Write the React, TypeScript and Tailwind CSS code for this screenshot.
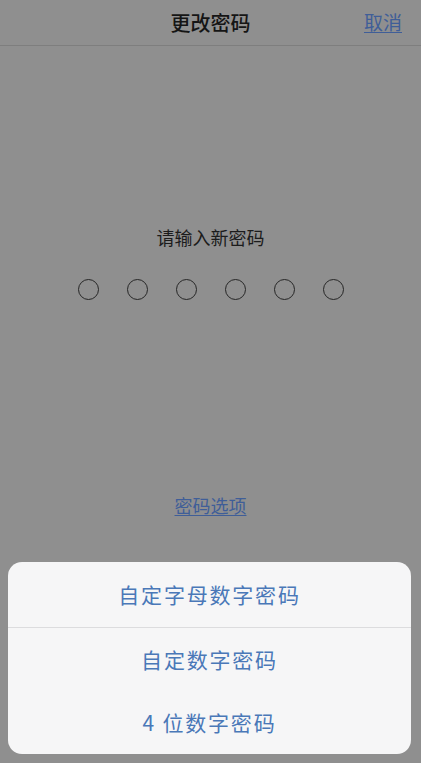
import React from "react";

export default function App() {
  const font = { fontFamily: '"Noto Sans CJK SC", "Noto Sans", sans-serif' };
  return (
    <div className="w-[421px] h-[763px] bg-[#8f8f8f] flex flex-col overflow-hidden" style={font}>
      <div className="h-[46px] border-b border-[#7e7e7e] relative flex items-center justify-center">
        <span className="text-[20px] font-medium text-[#151515] leading-none">更改密码</span>
        <span className="absolute right-[19px] top-[9px] text-[19px] leading-[26px] text-[#3f5e98] underline underline-offset-2">取消</span>
      </div>
      <div className="flex flex-col items-center">
        <div className="mt-[178px] text-[18px] leading-[26px] text-[#1c1c1c]">请输入新密码</div>
        <div className="mt-[29px] flex gap-[28px]">
          {[0, 1, 2, 3, 4, 5].map((i) => (
            <div key={i} className="w-[21px] h-[21px] rounded-full border-[1.7px] border-[#262626]" />
          ))}
        </div>
        <div className="mt-[192px] text-[18px] leading-[26px] text-[#3f5e98] underline underline-offset-2">密码选项</div>
      </div>
      <div className="mt-[44px] mx-[8px] w-[403px] bg-[#f6f6f7] rounded-[14px] flex flex-col">
        <div className="h-[66px] flex items-center justify-center border-b border-[#dcdcde] text-[21px] tracking-[1.8px] text-[#4a78b8]">
          自定字母数字密码
        </div>
        <div className="h-[63px] flex items-center justify-center text-[21px] tracking-[1.8px] text-[#4a78b8]">
          自定数字密码
        </div>
        <div className="h-[63px] flex items-center justify-center text-[21px] tracking-[1.8px] text-[#4a78b8]">
          4 位数字密码
        </div>
      </div>
    </div>
  );
}
